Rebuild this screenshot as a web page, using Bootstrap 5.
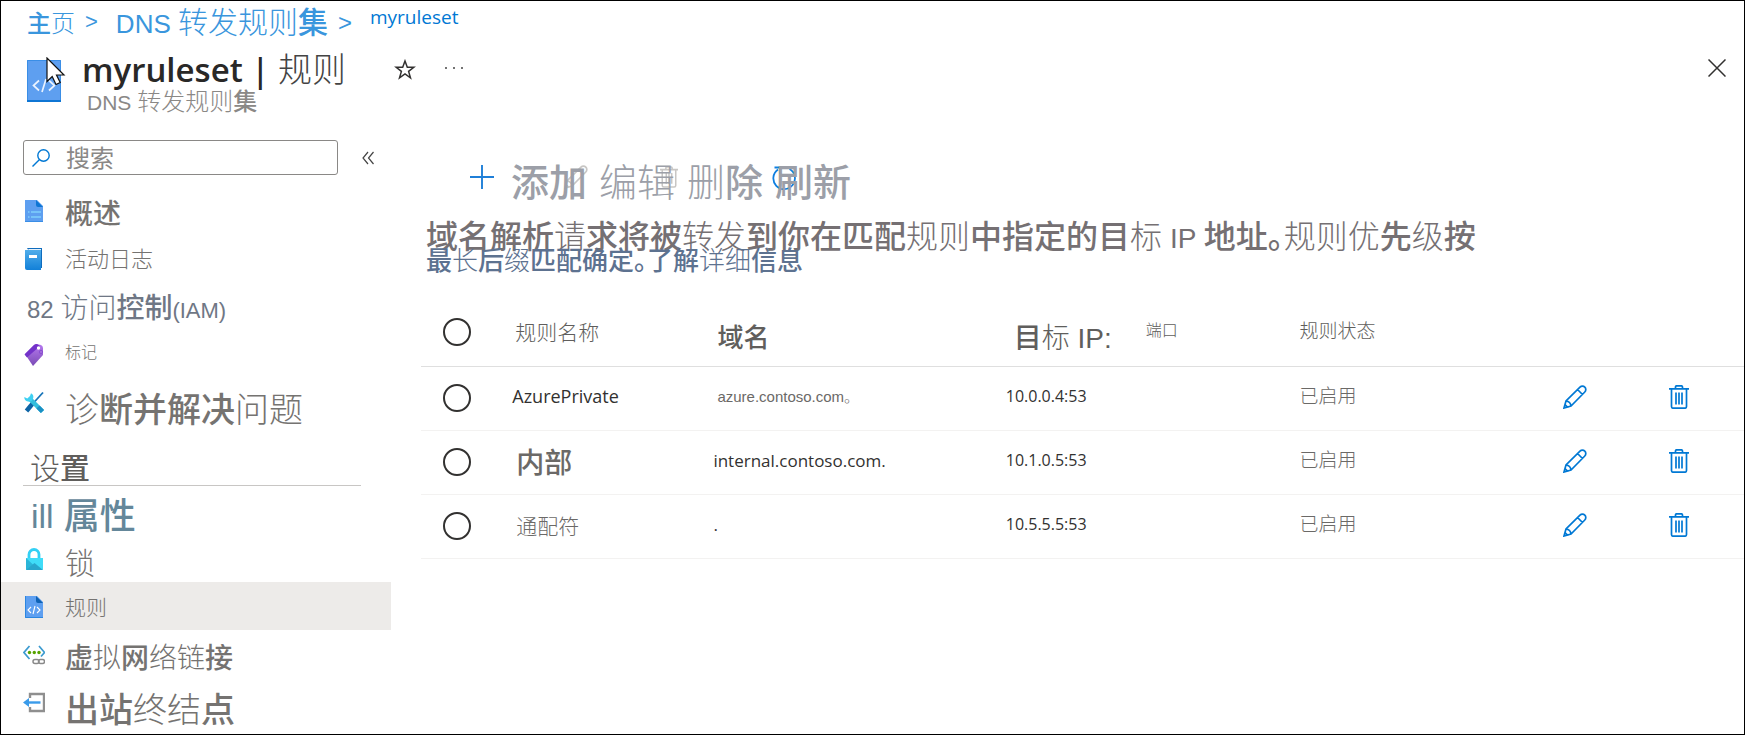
<!DOCTYPE html>
<html lang="zh-CN">
<head>
<meta charset="utf-8">
<meta name="viewport" content="width=device-width, initial-scale=1">
<title>myruleset | 规则</title>
<link rel="stylesheet" href="https://cdn.jsdelivr.net/npm/bootstrap@5.3.0/dist/css/bootstrap.min.css">
<style>
  body { font-family: "Liberation Sans", "Noto Sans CJK SC", sans-serif; font-weight: 300; line-height: 1; color: #666; background: #fff; }
  b { font-weight: 500; }
  .page { min-height: 100vh; border: 1px solid #000; }
  .ui { font-family: "Open Sans", "Noto Sans CJK SC", sans-serif; font-weight: 400; }
  .t15 { font-size: 15px; } .t16 { font-size: 16px; } .t17 { font-size: 17px; } .t18 { font-size: 18px; } .t19 { font-size: 19px; }
  .t21 { font-size: 21px; } .t22 { font-size: 22px; } .t24 { font-size: 24px; }
  .t26 { font-size: 26px; } .t28 { font-size: 28px; } .t30 { font-size: 30px; } .t32 { font-size: 32px; }
  .t33 { font-size: 33px; } .t34 { font-size: 34px; } .t36 { font-size: 36px; } .t38 { font-size: 38px; }
  .crumbs { height: 44px; padding: 7px 26px 0; color: #3a96dd; }
  .crumbs a { color: inherit; text-decoration: none; }
  .crumbs a.here { color: #0078d4; }
  .crumbs .sep { padding: 3px 18px 0 10px; }
  .head { height: 82px; padding: 10px 18px 0 25px; }
  .head h1 { color: #292827; font-weight: 600; line-height: 28px; }
  .head h1 span { color: #444; font-weight: 300; }
  .subtitle { color: #8a8886; padding: 6px 0 0 5px; }
  .cursor { left: 20px; top: -2px; }
  .plain { border: 0; background: none; padding: 0; color: inherit; line-height: 1; font-weight: inherit; }
  .side { width: 390px; flex: none; padding-top: 13px; }
  .search { width: 315px; height: 35px; margin-left: 22px; border: 1px solid #8a8886; border-radius: 3px; }
  .search input { border: 0; outline: 0; background: none; font-weight: 400; color: #666; width: 240px; padding: 2px 0 0; }
  .search input::placeholder { color: #8a8886; opacity: 1; }
  .side ul { padding-top: 11px; }
  .item { height: 48px; padding: 13px 0 0 22px; color: #757371; text-decoration: none; }
  .item svg { margin-right: 20px; flex: none; }
  .item svg + span { padding-top: 2px; }
  .item.active { background: #edebe9; }
  .item.wordy { padding-left: 26px; color: #6f7785; }
  .item.props { color: #64879a; padding-left: 30px; gap: 10px; }
  .side h2 { height: 60px; width: 338px; margin: 0 0 0 22px; padding: 25px 0 0 7px; border-bottom: 1px solid #c8c6c4; color: #605e5c; font-weight: 300; }
  .work { min-width: 0; padding: 37px 0 0 30px; }
  .tools { color: #9c9fa8; gap: 12px; padding-left: 48px; }
  .tools .under { position: absolute; top: 1px; z-index: 0; }
  .tools .label { position: relative; z-index: 1; }
  .intro { padding-left: 5px; margin: 25px 0 0; color: #757073; line-height: 20px; font-feature-settings: "halt"; white-space: nowrap; }
  .intro a { display: block; color: #5d7290; text-decoration: none; line-height: 24px; }
  .rules { table-layout: fixed; margin: 25px 0 0; --bs-table-bg: transparent; }
  .rules th, .rules td { padding: 0; border: 0; height: 64px; vertical-align: middle; font-weight: 300; color: #6b6967; white-space: nowrap; }
  .rules th { height: 68px; border-bottom: 1px solid #dfdfdf; vertical-align: top; padding: 24px 0 0 3px; color: #605e5c; }
  .rules th.tall { padding-top: 27px; }
  .rules td { border-bottom: 1px solid #f3f2f1; }
  .rules td.ui, .rules td.t15, .rules td.t19 { padding-bottom: 4px; }
  .rules td:nth-child(2).t28 { padding-top: 4px; }
  .rules .ui { font-weight: 400; color: #323130; }
  .rules .port { padding-left: 34px; margin-top: -2px; }
  .rules th:first-child, .rules td:first-child { padding: 0 0 0 22px; vertical-align: middle; }
  .rules input { appearance: none; width: 28px; height: 28px; border: 2px solid #323130; border-radius: 50%; display: block; margin: 0; background: #fff; }
  .rules .plain { color: #0078d4; }
  .rules svg { display: block; }
</style>
</head>
<body>
<svg width="0" height="0" class="position-absolute" aria-hidden="true">
  <defs>
    <symbol id="pencil" viewBox="0 0 24 24"><path d="M1 23l2-7L17 2.200a2.800 2.800 0 0 1 4.800 4.800L8 21zM14.500 4.500l5 5M3 16q4.500.5 5 5M1 23l3.500-1-2.500-2.500z" fill="none" stroke="currentColor" stroke-width="1.700"/></symbol>
    <symbol id="bin" viewBox="0 0 20 24"><path d="M0 3.800h20M6.500 3.500V2q0-1.200 1.200-1.200h4.600q1.200 0 1.200 1.200v1.500M2.500 4v17.500q0 1.700 1.700 1.700h11.600q1.700 0 1.700-1.700V4M7 7.500v12M10 7.500v12M13 7.500v12" fill="none" stroke="currentColor" stroke-width="1.700"/></symbol>
  </defs>
</svg>
<div class="page d-flex flex-column">
  <nav class="crumbs d-flex align-items-start" aria-label="breadcrumb">
    <a href="#" class="t24 pt-1"><b>主</b>页</a><span class="sep t22">&gt;</span>
    <a href="#"><span class="t26">DNS&nbsp;</span><span class="t30">转发规则<b>集</b></span></a><span class="sep t24">&gt;</span>
    <a href="#" class="ui t19 here">myruleset</a>
  </nav>

  <header class="head d-flex align-items-start">
    <div class="position-relative me-3 mt-1">
      <svg width="36" height="44" viewBox="0 0 36 44"><path d="M1 1h34v42H1z" fill="#5e9ff0"/><path d="M1.500 1.500h33v41h-33z" fill="none" stroke="#3a8ee6"/><path d="M1 42h34" stroke="#0f76d4" stroke-width="2"/><path d="M13 21.500l-5.500 5 5.500 5M23 21.500l5.500 5-5.500 5M20 20l-4 13" fill="none" stroke="#e9f2ff" stroke-width="1.700"/></svg>
      <svg class="cursor position-absolute" width="20" height="29" viewBox="0 0 20 29"><path d="M1 1v23.500l5.200-5 3.800 8 4.200-2-3.700-7.500H18z" fill="#fff" stroke="#111" stroke-width="1.200"/></svg>
    </div>
    <div class="ps-1">
      <h1 class="ui t33 m-0">myruleset | <span class="t34">规则</span></h1>
      <div class="subtitle"><span class="t21">DNS&nbsp;</span><span class="t24">转发规则<b>集</b></span></div>
    </div>
    <button class="plain ms-5 mt-1" aria-label="收藏"><svg width="22" height="22" viewBox="0 0 22 22"><path d="M11 2l2.300 6.300h6.500l-5.200 4.100 1.900 6.500-5.500-3.900-5.500 3.900 1.900-6.500L2.200 8.300h6.500z" fill="none" stroke="#323130" stroke-width="1.500"/></svg></button>
    <button class="plain ms-4 mt-1 ps-1" aria-label="更多"><svg width="20" height="16" viewBox="0 0 20 16"><g fill="#444"><circle cx="2" cy="8" r="1"/><circle cx="10" cy="8" r="1"/><circle cx="18" cy="8" r="1"/></g></svg></button>
    <button class="plain ms-auto mt-1" aria-label="关闭"><svg width="18" height="18" viewBox="0 0 18 18"><path d="M.5.5l17 17M17.500.5l-17 17" stroke="#323130" stroke-width="1.500"/></svg></button>
  </header>

  <div class="d-flex flex-grow-1">
    <aside class="side">
      <div class="d-flex align-items-center">
        <label class="search d-flex align-items-center ps-2">
          <svg class="me-3" width="18" height="18" viewBox="0 0 18 18"><circle cx="11.500" cy="6.500" r="5.700" fill="none" stroke="#0078d4" stroke-width="1.400"/><path d="M7.300 10.700L.5 17.500" stroke="#0078d4" stroke-width="1.400"/></svg>
          <input class="t24" type="text" placeholder="搜索" aria-label="搜索">
        </label>
        <button class="plain ms-4" aria-label="折叠"><svg width="12" height="14" viewBox="0 0 12 14"><path d="M6 1L1 7l5 6M11.500 1l-5 6 5 6" fill="none" stroke="#444" stroke-width="1.200"/></svg></button>
      </div>
      <ul class="list-unstyled m-0">
        <li><a href="#" class="item d-flex align-items-start"><svg width="22" height="24" viewBox="0 0 22 24"><path d="M2 1h12l6 6v16H2z" fill="#5e9ff0"/><path d="M13 1l7 7h-5q-2 0-2-2z" fill="#0f76d4"/><path d="M5 13h1.500M8 13h10M5 18h1.500M8 18h10" stroke="#7fd0fb" stroke-width="1.700"/><path d="M2 22.500h18" stroke="#3a8ee6"/></svg><span class="t28"><b>概述</b></span></a></li>
        <li><a href="#" class="item d-flex align-items-start"><svg width="22" height="24" viewBox="0 0 22 24"><defs><linearGradient id="bk" x2="0" y2="1"><stop stop-color="#50adea"/><stop offset="1" stop-color="#1280d8"/></linearGradient></defs><path d="M4 1h15v20h-2z" fill="#0f6cbd"/><path d="M5 2h13v19" fill="#e6f1fb"/><path d="M2 3h16v20H4q-2 0-2-2z" fill="url(#bk)"/><path d="M6 8h8v3H6z" fill="#fff"/></svg><span class="t22">活动日志</span></a></li>
        <li><a href="#" class="item wordy d-flex align-items-baseline"><span class="t24">82&nbsp;</span><span class="t28">访问<b>控制</b></span><span class="t22">(IAM)</span></a></li>
        <li><a href="#" class="item d-flex align-items-start"><svg width="22" height="24" viewBox="0 0 22 24"><defs><linearGradient id="tg" x2="0" y2="1"><stop stop-color="#b77af0"/><stop offset="1" stop-color="#7a4bb5"/></linearGradient></defs><path d="M2 11L11 2q1-1 3-1l4 1q2 1 2 3v7L10 23z" fill="url(#tg)"/><path d="M1.500 11.500L11 2q1-1 3-1l3 2L4 14.500z" fill="#7332c9"/><circle cx="15.500" cy="5" r="1.700" fill="#fff"/><circle cx="18" cy="9" r="1.700" fill="none" stroke="#8a4fd0"/></svg><span class="t16">标记</span></a></li>
        <li><a href="#" class="item d-flex align-items-start"><svg width="22" height="24" viewBox="0 0 22 24"><path d="M20 1.500L4 19" stroke="#1673b8" stroke-width="1.800"/><path d="M10.500 11.500L3.500 20" stroke="#0d64a6" stroke-width="4.500"/><path d="M6 7l13.500 13.500" stroke="#32bedd" stroke-width="4.500"/><path d="M8 2.200A4.500 4.500 0 1 1 1.300 6l3 1.500L7 5z" fill="#3fd0f2"/><path d="M15 16l4.500 4.500" stroke="#1a90c4" stroke-width="4.500"/></svg><span class="t34">诊<b>断并解决</b>问题</span></a></li>
      </ul>
      <h2 class="t30">设<b>置</b></h2>
      <nav class="d-flex flex-column">
        <a href="#" class="item props d-flex align-items-start"><span class="t34">ill</span><span class="t36"><b>属性</b></span></a>
        <a href="#" class="item d-flex align-items-start"><svg width="22" height="24" viewBox="0 0 22 24"><path d="M6 12V7.500a5 5 0 0 1 10 0V12" fill="none" stroke="#32d0f5" stroke-width="2.800"/><path d="M3 11h17v11q0 1-1 1H4q-1 0-1-1z" fill="#3fdcf8"/><path d="M3 11l8.500 8L3 23z" fill="#2bb5d8"/><path d="M3 23l8.500-7L20 23z" fill="#28a6cc"/></svg><span class="t30">锁</span></a>
        <a href="#" class="item active d-flex align-items-start" aria-current="page"><svg width="22" height="24" viewBox="0 0 22 24"><path d="M2 1h12l6 6v16H2z" fill="#5e9ff0"/><path d="M13 1l7 7h-5q-2 0-2-2z" fill="#0f62b4"/><path d="M8 12l-3 3 3 3M14 12l3 3-3 3M12 11l-2 8" fill="none" stroke="#fff" stroke-width="1.100"/><path d="M2.500 1v21.500H20" stroke="#2b86e0" fill="none"/></svg><span class="t21">规则</span></a>
        <a href="#" class="item d-flex align-items-start"><svg width="22" height="24" viewBox="0 0 22 24"><path d="M6.500 3L1 9.500 6.500 16M16 3l5.500 6.500L18 13.500" fill="none" stroke="#3c9bd0" stroke-width="1.700"/><g fill="#57a300"><circle cx="6.500" cy="9.500" r="1.700"/><circle cx="11.300" cy="9.500" r="1.700"/><circle cx="16" cy="9.500" r="1.700"/></g><rect x="10" y="16.500" width="6" height="4" rx="2" fill="none" stroke="#8a8a8a" stroke-width="1.500"/><rect x="15.500" y="16.500" width="6" height="4" rx="2" fill="none" stroke="#8a8a8a" stroke-width="1.500"/></svg><span class="t28"><b>虚</b>拟<b>网</b>络链<b>接</b></span></a>
        <a href="#" class="item d-flex align-items-start"><svg width="22" height="24" viewBox="0 0 22 24"><path d="M7 7V3h14v17H7v-4" fill="none" stroke="#8f8f8f" stroke-width="2.400"/><path d="M17.500 11.500H4" stroke="#3a9bea" stroke-width="2.400"/><path d="M0 11.500L6 7v9z" fill="#3a9bea"/></svg><span class="t34"><b>出站</b>终结<b>点</b></span></a>
      </nav>
    </aside>

    <main class="work flex-grow-1">
      <div class="tools d-flex align-items-start">
        <button class="plain d-flex t38"><svg class="me-3" width="26" height="26" viewBox="0 0 26 26"><path d="M13 1v24M1 13h24" stroke="#1f7fd8" stroke-width="1.900"/></svg><b class="label">添加</b></button>
        <button class="plain position-relative t38"><svg class="under" style="left:-35px;color:#c8c6c4" width="24" height="24"><use href="#pencil"/></svg><span class="label">编辑</span></button>
        <button class="plain position-relative t38"><svg class="under" style="left:-27px;color:#c8c6c4" width="18" height="24"><use href="#bin"/></svg><span class="label">删<b>除</b></span></button>
        <button class="plain position-relative t38"><svg class="under" style="left:-3px" width="24" height="26" viewBox="0 0 24 26"><path d="M6 4.500A10.800 10.800 0 1 0 17.500 4M2.500 2.500H9M8 2.500V9" fill="none" stroke="#0f7fe0" stroke-width="1.800"/></svg><b class="label">刷新</b></button>
      </div>
      <p class="intro t32"><b>域名解析</b>请<b>求将被</b>转发<b>到你在匹配</b>规则<b>中指定的目</b>标<span class="t28"> IP </span><b>地址。</b>规则优<b>先</b>级<b>按</b>
        <a href="#" class="t26"><b>最</b>长<b>后</b>缀<b>匹配确定。了解</b>详细<b>信息</b></a></p>
      <table class="rules table">
        <colgroup><col style="width:6.900%"><col style="width:15.200%"><col style="width:22.100%"><col style="width:22.200%"><col style="width:19.900%"><col style="width:8%"><col></colgroup>
        <thead><tr>
          <th><input type="radio" name="rule" aria-label="全选"></th>
          <th class="t21">规则名称</th>
          <th class="tall t26 ps-1"><b>域名</b></th>
          <th class="tall ps-2"><div class="d-flex"><span class="t28"><b>目</b>标 IP:</span><span class="port t16">端口</span></div></th>
          <th class="t19 ps-0">规则状态</th><th></th><th></th>
        </tr></thead>
        <tbody>
          <tr><td><input type="radio" name="rule" aria-label="AzurePrivate"></td><td class="ui t18">AzurePrivate</td><td class="t15 ps-1">azure.contoso.com。</td><td class="ui t16">10.0.0.4:53</td><td class="t19">已启用</td>
            <td><button class="plain" aria-label="编辑"><svg width="24" height="24"><use href="#pencil"/></svg></button></td><td><button class="plain" aria-label="删除"><svg width="20" height="24"><use href="#bin"/></svg></button></td></tr>
          <tr><td><input type="radio" name="rule" aria-label="内部"></td><td class="t28 ps-1"><b>内部</b></td><td class="ui t17">internal.contoso.com.</td><td class="ui t16">10.1.0.5:53</td><td class="t19">已启用</td>
            <td><button class="plain" aria-label="编辑"><svg width="24" height="24"><use href="#pencil"/></svg></button></td><td><button class="plain" aria-label="删除"><svg width="20" height="24"><use href="#bin"/></svg></button></td></tr>
          <tr><td><input type="radio" name="rule" aria-label="通配符"></td><td class="t21 ps-1">通配符</td><td class="ui t17">.</td><td class="ui t16">10.5.5.5:53</td><td class="t19">已启用</td>
            <td><button class="plain" aria-label="编辑"><svg width="24" height="24"><use href="#pencil"/></svg></button></td><td><button class="plain" aria-label="删除"><svg width="20" height="24"><use href="#bin"/></svg></button></td></tr>
        </tbody>
      </table>
    </main>
  </div>
</div>
<script src="https://cdn.jsdelivr.net/npm/bootstrap@5.3.0/dist/js/bootstrap.bundle.min.js"></script>
</body>
</html>
